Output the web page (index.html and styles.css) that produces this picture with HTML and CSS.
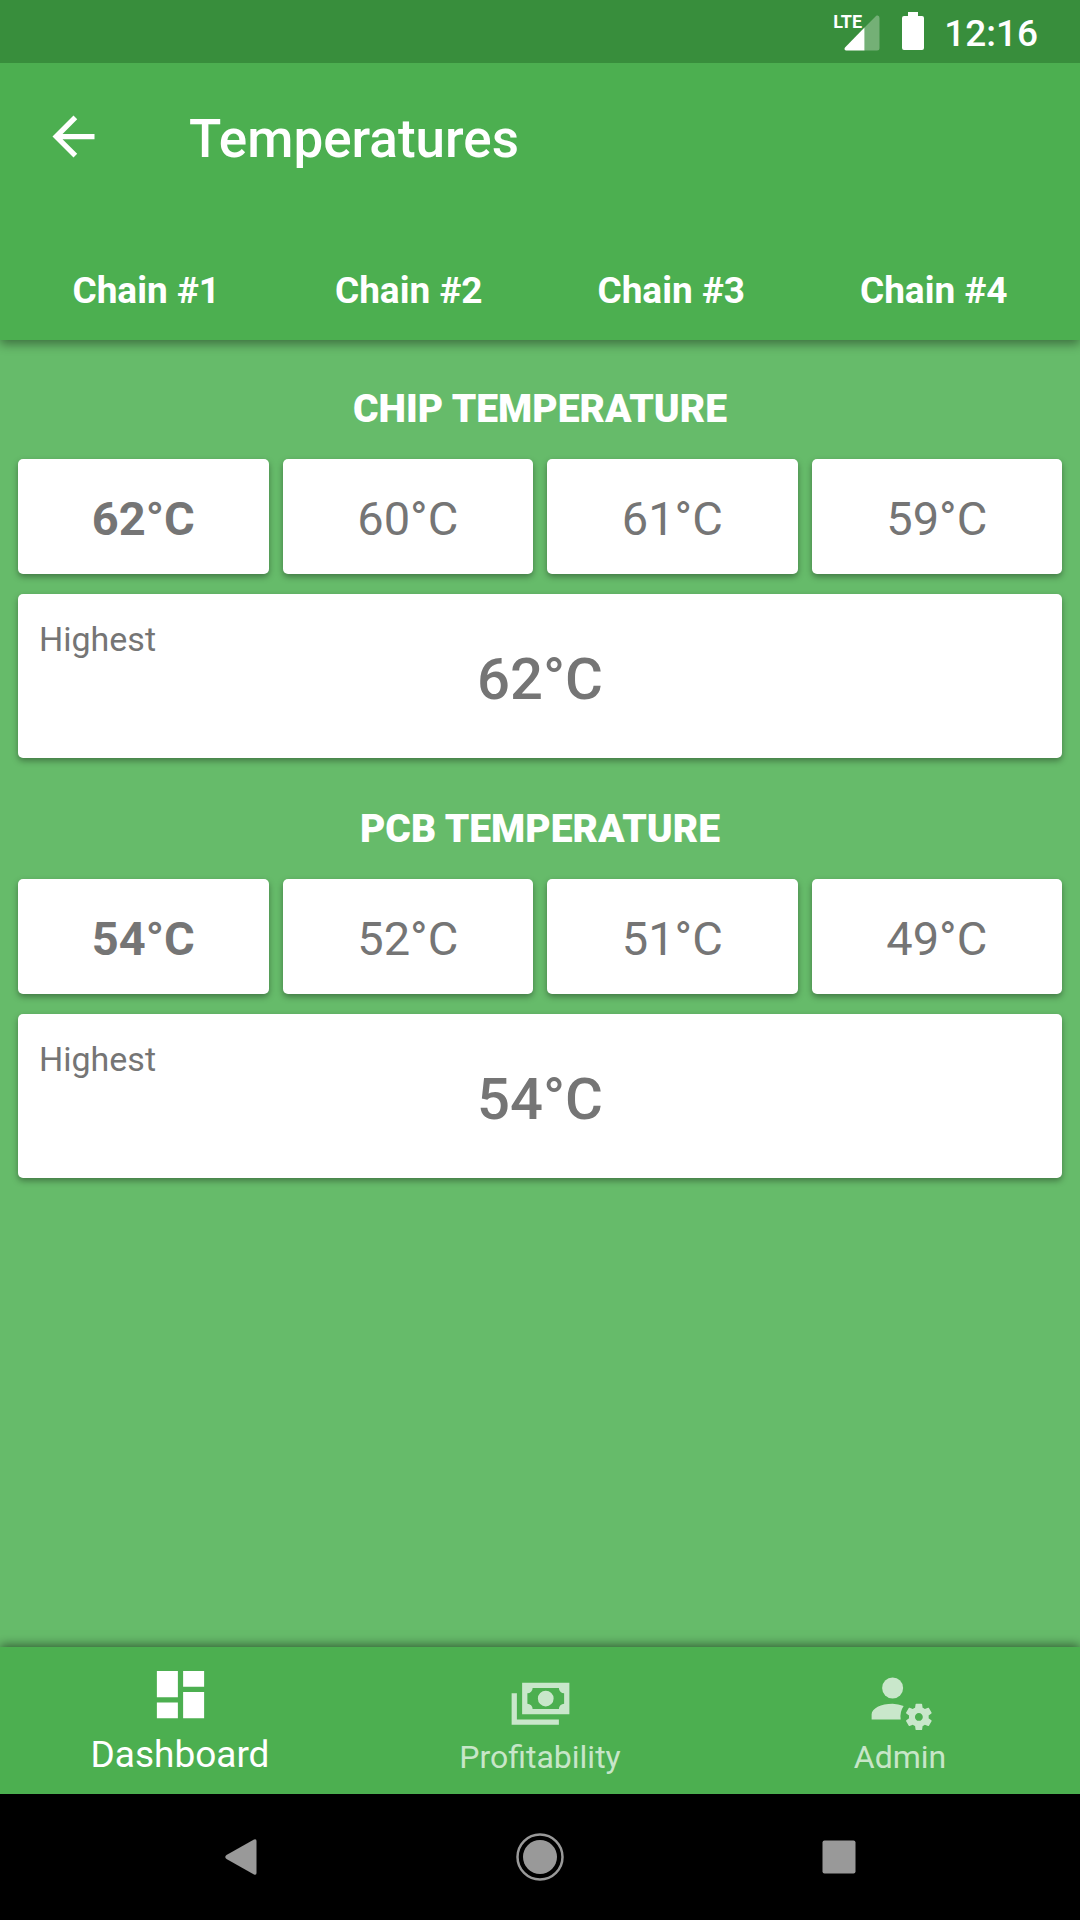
FILE: index.html
```html
<!DOCTYPE html>
<html lang="en">
<head>
<meta charset="utf-8">
<meta name="viewport" content="width=device-width, initial-scale=1">
<title>Temperatures</title>
<link rel="stylesheet" href="styles.css">
</head>
<body>
<div class="status-bar">
  <div class="signal">
    <span class="signal-label">LTE</span>
    <svg class="signal-icon" viewBox="0 0 36 36" aria-hidden="true">
      <path d="M33 0.500Q35.500 0 35.500 3V33Q35.500 35.500 33 35.500H20.500V12.500L31.500 1.500Q32.200 0.700 33 0.500Z" fill="#fff" fill-opacity=".3"/>
      <path d="M20.500 12.500V35.500H2Q-0.300 35 1 32.500Z" fill="#fff"/>
    </svg>
  </div>
  <svg class="battery" viewBox="0 0 22 38" aria-hidden="true">
    <path d="M6 0H16V4H20Q22 4 22 6V36Q22 38 20 38H2Q0 38 0 36V6Q0 4 2 4H6Z" fill="#fff"/>
  </svg>
  <span class="clock">12:16</span>
</div>

<header class="app-bar">
  <div class="toolbar">
    <button class="back" type="button" aria-label="Back">
      <svg class="icon" viewBox="0 0 24 24"><path d="M20 11H7.830l5.590-5.590L12 4l-8 8 8 8 1.410-1.410L7.830 13H20z"/></svg>
    </button>
    <h1 class="title">Temperatures</h1>
  </div>
  <div class="chains">
    <span>Chain #1</span>
    <span>Chain #2</span>
    <span>Chain #3</span>
    <span>Chain #4</span>
  </div>
</header>

<main class="content">
  <section class="group">
    <h2 class="group-title">CHIP TEMPERATURE</h2>
    <div class="readings">
      <div class="card reading reading-max">62°C</div>
      <div class="card reading">60°C</div>
      <div class="card reading">61°C</div>
      <div class="card reading">59°C</div>
    </div>
    <div class="card summary">
      <span class="summary-label">Highest</span>
      <span class="summary-value">62°C</span>
    </div>
  </section>
  <section class="group">
    <h2 class="group-title">PCB TEMPERATURE</h2>
    <div class="readings">
      <div class="card reading reading-max">54°C</div>
      <div class="card reading">52°C</div>
      <div class="card reading">51°C</div>
      <div class="card reading">49°C</div>
    </div>
    <div class="card summary">
      <span class="summary-label">Highest</span>
      <span class="summary-value">54°C</span>
    </div>
  </section>
</main>

<nav class="tab-bar">
  <a class="tab tab-active" href="#dashboard" aria-current="page">
    <svg class="icon" viewBox="0 0 24 24" aria-hidden="true"><path d="M3 13h8V3H3v10zm0 8h8v-6H3v6zm10 0h8V11h-8v10zm0-18v6h8V3h-8z"/></svg>
    <span>Dashboard</span>
  </a>
  <a class="tab" href="#profitability">
    <svg class="icon" viewBox="0 0 24 24" aria-hidden="true"><path d="M5,6H23V18H5V6M14,9A3,3 0 0,1 17,12A3,3 0 0,1 14,15A3,3 0 0,1 11,12A3,3 0 0,1 14,9M9,8A2,2 0 0,1 7,10V14A2,2 0 0,1 9,16H19A2,2 0 0,1 21,14V10A2,2 0 0,1 19,8H9M1,10H3V20H19V22H1V10Z"/></svg>
    <span>Profitability</span>
  </a>
  <a class="tab" href="#admin">
    <svg class="icon" viewBox="0 0 24 24" aria-hidden="true">
      <circle cx="9" cy="8" r="4"/>
      <path d="M9 14C4.580 14 1 15.790 1 18V20H12.080A7 7 0 0 1 13.200 14.900A14 14 0 0 0 9 14Z"/>
      <path transform="translate(1 2)" d="M17 12C16.870 12 16.760 12.090 16.740 12.210L16.550 13.530C16.250 13.660 15.960 13.820 15.700 14L14.460 13.500C14.350 13.500 14.220 13.500 14.150 13.630L13.150 15.360C13.090 15.470 13.110 15.600 13.210 15.680L14.270 16.500C14.250 16.670 14.240 16.830 14.240 17C14.240 17.170 14.250 17.330 14.270 17.500L13.210 18.320C13.120 18.400 13.090 18.530 13.150 18.640L14.150 20.370C14.210 20.500 14.340 20.500 14.460 20.500L15.700 20C15.960 20.180 16.240 20.350 16.550 20.470L16.740 21.790C16.760 21.910 16.860 22 17 22H19C19.110 22 19.220 21.910 19.240 21.790L19.430 20.470C19.730 20.340 20 20.180 20.270 20L21.500 20.500C21.630 20.500 21.760 20.500 21.830 20.370L22.830 18.640C22.890 18.530 22.860 18.400 22.770 18.320L21.700 17.500C21.720 17.330 21.740 17.170 21.740 17C21.740 16.840 21.730 16.670 21.700 16.500L22.760 15.680C22.850 15.600 22.880 15.470 22.820 15.360L21.820 13.630C21.760 13.500 21.630 13.500 21.500 13.500L20.270 14C20 13.820 19.730 13.650 19.420 13.530L19.230 12.210C19.220 12.090 19.110 12 19 12H17M18 15.500C18.830 15.500 19.500 16.170 19.500 17C19.500 17.830 18.830 18.500 18 18.500C17.160 18.500 16.500 17.830 16.500 17C16.500 16.170 17.170 15.500 18 15.500Z"/>
    </svg>
    <span>Admin</span>
  </a>
</nav>

<div class="system-nav">
  <button class="system-button" type="button" aria-label="System back">
    <svg viewBox="0 0 48 48"><path d="M9.500 22L37 6.500Q39.500 5.500 39.500 8V40Q39.500 42.500 37 41.500L9.500 26Q7 24 9.500 22Z"/></svg>
  </button>
  <button class="system-button" type="button" aria-label="Home">
    <svg viewBox="0 0 48 48"><circle cx="24" cy="24" r="22.500" fill="none" stroke="#999" stroke-width="2.500"/><circle cx="24" cy="24" r="17"/></svg>
  </button>
  <button class="system-button" type="button" aria-label="Overview">
    <svg viewBox="0 0 48 48"><rect x="7.500" y="7.500" width="33" height="33" rx="2"/></svg>
  </button>
</div>
</body>
</html>
```

FILE: styles.css
```css
* {
  box-sizing: border-box;
}

body {
  margin: 0;
  min-height: 100vh;
  display: flex;
  flex-direction: column;
  background: #66bb6a;
  color: #fff;
  font-family: Roboto, "Liberation Sans", sans-serif;
}

button {
  padding: 0;
  border: 0;
  background: none;
  color: inherit;
  font: inherit;
}

.icon {
  display: block;
  width: 63px;
  height: 63px;
  fill: currentColor;
}

/* Status bar */
.status-bar {
  position: relative;
  z-index: 1;
  display: flex;
  align-items: flex-start;
  justify-content: flex-end;
  height: 63px;
  padding: 12px 42px 0 0;
  background: #388e3c;
}

.signal {
  position: relative;
  width: 47px;
  margin-right: 22px;
  padding: 3px 0 0 11px;
}

.signal-icon {
  display: block;
  width: 36px;
  height: 36px;
}

.signal-label {
  position: absolute;
  top: 0;
  left: 0;
  font-size: 18px;
  font-weight: 700;
  line-height: 20px;
}

.battery {
  width: 22px;
  height: 38px;
}

.clock {
  margin-left: 20px;
  font-size: 37px;
  font-weight: 500;
  line-height: 44px;
}

/* App bar */
.app-bar {
  position: relative;
  background: #4caf50;
  box-shadow: 0 4px 10px rgba(0, 0, 0, .4);
}

.toolbar {
  display: flex;
  align-items: flex-start;
  gap: 84px;
  height: 147px;
  padding: 42px;
}

.title {
  margin: 0;
  font-size: 53px;
  font-weight: 500;
  line-height: 68px;
}

.chains {
  display: grid;
  grid-template-columns: repeat(4, 1fr);
  padding: 59px 15px 27px;
  font-size: 37px;
  font-weight: 700;
  line-height: 44px;
  text-align: center;
}

/* Temperature groups */
.content {
  flex: 1;
  display: flex;
  flex-direction: column;
  gap: 48px;
  padding: 46px 18px;
}

.group-title {
  margin: 0 0 27px;
  font-size: 39px;
  font-weight: 900;
  line-height: 46px;
  text-align: center;
}

.readings {
  display: grid;
  grid-template-columns: repeat(4, 1fr);
  gap: 14px;
  margin-bottom: 20px;
}

.card {
  border-radius: 5px;
  background: #fff;
  box-shadow: 0 3px 6px rgba(0, 0, 0, .35);
  color: #757575;
}

.reading {
  padding: 32px 0 28px;
  font-size: 47px;
  line-height: 55px;
  text-align: center;
}

.reading-max {
  font-weight: 700;
}

.summary {
  display: grid;
  grid-template-columns: 1fr auto 1fr;
  min-height: 164px;
  padding: 25px 21px 19px;
}

.summary-label {
  font-size: 34px;
  line-height: 40px;
}

.summary-value {
  align-self: center;
  font-size: 58px;
  font-weight: 500;
  line-height: 68px;
}

/* Bottom tabs */
.tab-bar {
  position: relative;
  display: grid;
  grid-template-columns: repeat(3, 1fr);
  height: 147px;
  background: #4caf50;
  box-shadow: 0 -2px 10px rgba(0, 0, 0, .5);
}

.tab {
  display: flex;
  flex-direction: column;
  align-items: center;
  justify-content: flex-end;
  gap: 7px;
  padding-bottom: 17px;
  color: rgba(255, 255, 255, .7);
  font-size: 32px;
  line-height: 40px;
  text-decoration: none;
}

.tab-active {
  color: #fff;
  font-size: 37px;
  line-height: 44px;
}

/* System navigation */
.system-nav {
  position: relative;
  display: grid;
  grid-template-columns: repeat(3, 1fr);
  height: 126px;
  padding: 0 91px;
  background: #000;
}

.system-button {
  display: flex;
  align-items: center;
  justify-content: center;
}

.system-button svg {
  width: 48px;
  height: 48px;
  fill: #999;
}
```
